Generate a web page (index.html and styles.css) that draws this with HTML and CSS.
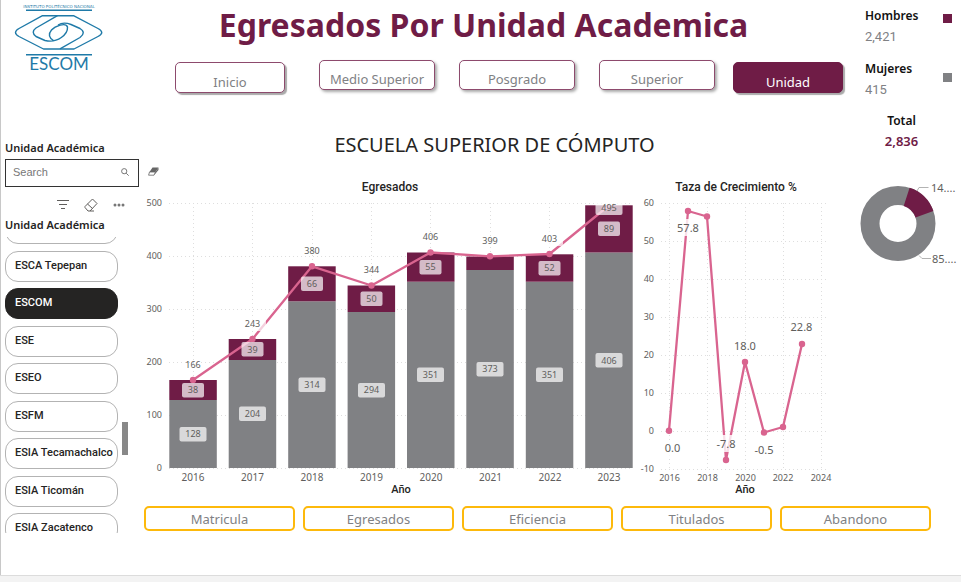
FILE: index.html
```html
<!DOCTYPE html>
<html lang="es">
<head>
<meta charset="utf-8">
<title>Egresados Por Unidad Academica</title>
<link rel="stylesheet" href="styles.css">
</head>
<body>
<div class="report">
  <aside class="sidebar">
    <svg class="logo" viewBox="0 0 110 74" role="img" aria-label="Instituto Politécnico Nacional ESCOM">
      <g fill="none" stroke="#1f7aa8" stroke-width="1.4" stroke-linejoin="round">
        <path d="M26 10.300H92M26 54.700H92"/>
        <path d="M42.500 15.700H73.500L98 28.500Q105.500 32.500 98 36.500L74 49H43.500L19 36.500Q12 32.500 19 28.500Z"/>
        <path d="M57.500 15.700L36 28Q30.500 32 36 36.500L45 40.500C58 43.500 68 34 67.500 27C66 22 55 26 51.500 30C48 34 49 38 53.500 40.500"/>
        <path d="M60 48.800L80 37.500Q86.500 32.500 80 28.500L71 24.500C66 22.500 61 23 58 25"/>
      </g>
      <text class="logo-top" x="59" y="8" text-anchor="middle">INSTITUTO POLITÉCNICO NACIONAL</text>
      <text class="logo-name" x="59" y="70" text-anchor="middle">ESCOM</text>
    </svg>

    <label class="side-title" for="search">Unidad Académica</label>
    <div class="search-row">
      <div class="search-box">
        <input id="search" type="text" placeholder="Search">
        <svg class="icon-search" viewBox="0 0 8 8"><circle cx="3.200" cy="3.200" r="2.600"/><path d="M5.200 5.200L7.700 7.700"/></svg>
      </div>
      <button class="clear" type="button" aria-label="Borrar">
        <svg viewBox="0 0 11 9"><path d="M4.500 .5H10.500L7.500 5H1.500Z" fill="#666"/><path d="M1.500 5H7.500L6 8.200H.6Z" fill="#fff" stroke="#666" stroke-width=".8"/><path d="M7.500 5L10.500 .5V3L6 8.200Z" fill="#666"/></svg>
      </button>
    </div>
    <div class="tools">
      <button type="button" aria-label="Filtros"><svg viewBox="0 0 14 14"><path d="M1 2.500H13M3 6.500H11M5 10.500H9"/></svg></button>
      <button type="button" aria-label="Borrar selección"><svg viewBox="0 0 14 14"><path d="M8.500 1L13 5.500L6 13H4L1 9.500V8.500ZM3.500 6L8.500 10.500M6 13H10"/></svg></button>
      <button type="button" aria-label="Más opciones"><svg class="dots" viewBox="0 0 14 14"><circle cx="3" cy="7" r="1.500"/><circle cx="7" cy="7" r="1.500"/><circle cx="11" cy="7" r="1.500"/></svg></button>
    </div>
    <h2 class="side-title">Unidad Académica</h2>
    <div class="scroller">
      <div class="units">
        <button type="button" tabindex="-1" aria-hidden="true"></button>
        <button type="button">ESCA Tepepan</button>
        <button type="button" class="selected" aria-pressed="true">ESCOM</button>
        <button type="button">ESE</button>
        <button type="button">ESEO</button>
        <button type="button">ESFM</button>
        <button type="button">ESIA Tecamachalco</button>
        <button type="button">ESIA Ticomán</button>
        <button type="button">ESIA Zacatenco</button>
      </div>
      <div class="thumb"></div>
    </div>
  </aside>

  <main class="main">
    <h1>Egresados Por Unidad Academica</h1>
    <nav class="levels">
      <button type="button" class="outer">Inicio</button>
      <div class="level-group">
        <button type="button">Medio Superior</button>
        <button type="button">Posgrado</button>
        <button type="button">Superior</button>
      </div>
      <button type="button" class="outer current">Unidad</button>
    </nav>
    <h2 class="school">ESCUELA SUPERIOR DE CÓMPUTO</h2>
    <div class="charts">
      <svg class="chart" viewBox="144 176 496 322" role="img" aria-label="Egresados">
        <text class="chart-title" x="390" y="191">Egresados</text>
        <path class="grid" d="M169 203.500H633M169 256.500H633M169 309.500H633M169 362.500H633M169 415.500H633M169 468.500H633M193.500 203V468M252.500 203V468M312.500 203V468M371.500 203V468M430.500 203V468M490.500 203V468M549.500 203V468M609.500 203V468"/>
        <g class="ticks end"><text x="162" y="206">500</text><text x="162" y="259">400</text><text x="162" y="312">300</text><text x="162" y="365">200</text><text x="162" y="418">100</text><text x="162" y="471">0</text></g>
        <g fill="#808184">
          <rect x="169.300" y="400" width="47.500" height="68"/><rect x="228.700" y="360" width="47.500" height="108"/><rect x="288.200" y="301.300" width="47.500" height="166.700"/><rect x="347.600" y="312" width="47.500" height="156"/><rect x="407" y="281.700" width="47.500" height="186.300"/><rect x="466.300" y="270" width="47.500" height="198"/><rect x="525.800" y="281.700" width="47.500" height="186.300"/><rect x="585.200" y="252.500" width="47.500" height="215.500"/>
        </g>
        <g fill="#6f1c46">
          <rect x="169.300" y="380" width="47.500" height="20"/><rect x="228.700" y="339" width="47.500" height="21"/><rect x="288.200" y="266.300" width="47.500" height="35"/><rect x="347.600" y="285.500" width="47.500" height="26.500"/><rect x="407" y="252.500" width="47.500" height="29.200"/><rect x="466.300" y="256.500" width="47.500" height="13.500"/><rect x="525.800" y="254.300" width="47.500" height="27.400"/><rect x="585.200" y="205.300" width="47.500" height="47.200"/>
        </g>
        <polyline class="series" points="193,380 252.500,339 312,266.300 371.500,285.500 430.500,252.500 490,256.300 549.500,254 609,205.500"/>
        <g class="points"><circle cx="193" cy="380" r="3.200"/><circle cx="252.500" cy="339" r="3.200"/><circle cx="312" cy="266.300" r="3.200"/><circle cx="371.500" cy="285.500" r="3.200"/><circle cx="430.500" cy="252.500" r="3.200"/><circle cx="490" cy="256.300" r="3.200"/><circle cx="549.500" cy="254" r="3.200"/></g>
        <g class="pills">
          <rect x="179.500" y="427" width="27" height="14.500" rx="2"/><rect x="239" y="406.500" width="27" height="14.500" rx="2"/><rect x="298.500" y="377.500" width="27" height="14.500" rx="2"/><rect x="358" y="383" width="27" height="14.500" rx="2"/><rect x="417" y="367.500" width="27" height="14.500" rx="2"/><rect x="476.500" y="362" width="27" height="14.500" rx="2"/><rect x="536" y="367.500" width="27" height="14.500" rx="2"/><rect x="595.500" y="353" width="27" height="14.500" rx="2"/>
          <rect x="182" y="383" width="22" height="14.500" rx="2"/><rect x="241.500" y="342" width="22" height="14.500" rx="2"/><rect x="301" y="276.500" width="22" height="14.500" rx="2"/><rect x="360.500" y="291.500" width="22" height="14.500" rx="2"/><rect x="419.500" y="260" width="22" height="14.500" rx="2"/><rect x="538.500" y="261" width="22" height="14.500" rx="2"/><rect x="598" y="221.500" width="22" height="14.500" rx="2"/>
          <rect x="595.500" y="200.500" width="27" height="14.500" rx="2"/><rect x="239" y="316" width="27" height="15" rx="2"/><rect x="536" y="231" width="27" height="15" rx="2"/>
        </g>
        <g class="ticks mid">
          <text x="193" y="437">128</text><text x="252.500" y="417">204</text><text x="312" y="388">314</text><text x="371.500" y="393">294</text><text x="430.500" y="378">351</text><text x="490" y="372">373</text><text x="549.500" y="378">351</text><text x="609" y="364">406</text>
          <text x="193" y="393">38</text><text x="252.500" y="353">39</text><text x="312" y="287">66</text><text x="371.500" y="302">50</text><text x="430.500" y="270">55</text><text x="549.500" y="271">52</text><text x="609" y="232">89</text>
          <text x="193" y="368">166</text><text x="252.500" y="327">243</text><text x="312" y="254">380</text><text x="371.500" y="273">344</text><text x="430.500" y="240">406</text><text x="490" y="244">399</text><text x="549.500" y="242">403</text><text x="609" y="211">495</text>
        </g>
        <g class="years"><text x="193" y="481">2016</text><text x="252.500" y="481">2017</text><text x="312" y="481">2018</text><text x="371.500" y="481">2019</text><text x="431" y="481">2020</text><text x="490.500" y="481">2021</text><text x="550" y="481">2022</text><text x="609" y="481">2023</text></g>
        <text class="axis-title" x="401" y="493">Año</text>
      </svg>

      <svg class="chart" viewBox="640 176 217 322" role="img" aria-label="Taza de Crecimiento %">
        <text class="chart-title" x="736" y="191">Taza de Crecimiento %</text>
        <path class="grid" d="M661 203.500H828M661 241.500H828M661 279.500H828M661 317.500H828M661 355.500H828M661 393.500H828M661 431.500H828M661 469.500H828M669.500 203V469M707.500 203V469M745.500 203V469M783.500 203V469M821.500 203V469"/>
        <g class="ticks end"><text x="654" y="206">60</text><text x="654" y="244">50</text><text x="654" y="282">40</text><text x="654" y="320">30</text><text x="654" y="358">20</text><text x="654" y="396">10</text><text x="654" y="434">0</text><text x="654" y="472">-10</text></g>
        <polyline class="series" points="669,430.700 688,211 707,216.500 726,460 745,362 764,432.500 783,427 802,344"/>
        <g class="points"><circle cx="669" cy="430.700" r="3.200"/><circle cx="688" cy="211" r="3.200"/><circle cx="707" cy="216.500" r="3.200"/><circle cx="726" cy="460" r="3.200"/><circle cx="745" cy="362" r="3.200"/><circle cx="764" cy="432.500" r="3.200"/><circle cx="783" cy="427" r="3.200"/><circle cx="802" cy="344" r="3.200"/></g>
        <g class="halos"><rect x="675" y="219" width="26" height="17"/><rect x="714" y="435" width="24" height="17"/><rect x="662" y="440" width="22" height="16"/><rect x="752" y="441" width="24" height="16"/></g>
        <g class="values"><text x="688" y="232">57.8</text><text x="672.500" y="452">0.0</text><text x="726" y="448">-7.8</text><text x="745" y="350">18.0</text><text x="764" y="454">-0.5</text><text x="801.500" y="331">22.8</text></g>
        <g class="ticks mid"><text x="669.500" y="481">2016</text><text x="707.500" y="481">2018</text><text x="745.500" y="481">2020</text><text x="783" y="481">2022</text><text x="821" y="481">2024</text></g>
        <text class="axis-title" x="745" y="493">Año</text>
      </svg>
    </div>
  </main>

  <section class="summary">
    <dl class="genders">
      <div class="gender"><div><dt>Hombres</dt><dd>2,421</dd></div><span class="key men"></span></div>
      <div class="gender"><div><dt>Mujeres</dt><dd>415</dd></div><span class="key women"></span></div>
    </dl>
    <dl class="total"><dt>Total</dt><dd>2,836</dd></dl>
    <svg class="donut" viewBox="857 180 104 88" role="img" aria-label="Distribución por género">
      <circle cx="898" cy="223.500" r="28" fill="none" stroke="#808184" stroke-width="19"/>
      <path fill="#6f1c46" d="M909.600 187.800A37.500 37.500 0 0 1 933.400 211.100L915.500 217.400A18.500 18.500 0 0 0 903.700 205.900Z"/>
      <path class="leader" d="M917 191L919 187.500H928.500M919 255.500L922 258.500H931"/>
      <g class="values start"><text x="931" y="192">14....</text><text x="932" y="263">85....</text></g>
    </svg>
  </section>

  <nav class="tabs">
    <button type="button">Matricula</button>
    <button type="button">Egresados</button>
    <button type="button">Eficiencia</button>
    <button type="button">Titulados</button>
    <button type="button">Abandono</button>
  </nav>
</div>
<footer class="strip"></footer>
</body>
</html>
```
FILE: styles.css
```css
* { box-sizing: border-box; }

body {
  margin: 0;
  min-height: 100vh;
  display: flex;
  flex-direction: column;
  background: #fff;
  color: #252423;
  font-family: "Noto Sans", "Open Sans", sans-serif;
}

h1, h2, dl, dd { margin: 0; }
button { font: inherit; cursor: pointer; }

.report {
  flex: 1;
  display: grid;
  grid-template-columns: 143px 1fr 104px;
  grid-template-rows: auto 1fr;
  border-left: 1px solid #c8c8c8;
}

.strip {
  height: 7px;
  background: #f3f3f3;
  border-top: 1px solid #dcdcdc;
}

/* Sidebar */
.sidebar {
  grid-row: 1 / 3;
  display: flex;
  flex-direction: column;
  padding-left: 4px;
}
.logo { width: 110px; margin: 0 0 66px -5px; }
.logo-top { font: 4px "DejaVu Sans", sans-serif; fill: #1f7aa8; }
.logo-name { font: 400 17px "Lato", sans-serif; fill: #1f7aa8; }

.side-title {
  font-size: 11px;
  font-weight: 600;
  line-height: 16px;
}
.search-row {
  display: flex;
  align-items: center;
  gap: 9px;
  width: max-content;
  margin-top: 3px;
}
.search-box {
  display: flex;
  align-items: center;
  width: 134px;
  height: 28px;
  padding: 0 9px 2px 7px;
  border: 1px solid #333;
}
.search-box input {
  flex: 1;
  min-width: 0;
  padding: 0;
  border: 0;
  outline: 0;
  font: 11px "Liberation Sans", sans-serif;
}
.search-box input::placeholder { color: #777; opacity: 1; }
.icon-search { width: 8px; fill: none; stroke: #777; stroke-width: 1; }
.clear { padding: 0 0 3px; border: 0; background: none; display: flex; }
.clear svg { width: 11px; }

.tools {
  display: flex;
  gap: 14px;
  padding: 11px 0 5px 51px;
}
.tools button { display: flex; padding: 0; border: 0; background: none; }
.tools svg { width: 14px; fill: none; stroke: #605e5c; stroke-width: 1; }
.tools .dots { fill: #777; stroke: none; }

.scroller {
  display: flex;
  gap: 4px;
  height: 296px;
  margin-top: 4px;
  overflow: hidden;
}
.units {
  display: flex;
  flex-direction: column;
  justify-content: space-between;
  flex: none;
  width: 113px;
  height: 331px;
  margin-top: -24px;
}
.units button {
  height: 31px;
  padding: 0 0 2px 9px;
  border: 1px solid #b3b3b3;
  border-radius: 13px;
  background: #fff;
  color: #252423;
  font: 500 11px "Roboto", sans-serif;
  text-align: left;
  white-space: nowrap;
}
.units .selected { background: #252423; border-color: #252423; color: #fff; }
.thumb { width: 6px; height: 33px; margin-top: 185px; background: #888; }

/* Main column */
h1 {
  color: #6f1c46;
  font-size: 32px;
  line-height: 50px;
  text-align: center;
  white-space: nowrap;
  padding-right: 34px;
}
.levels {
  display: flex;
  padding: 10px 0 0 31px;
}
.level-group {
  display: flex;
  gap: 24px;
  margin: 0 18px 0 34px;
}
.levels button {
  display: flex;
  align-items: flex-end;
  justify-content: center;
  width: 116px;
  height: 30px;
  padding: 0;
  border: 1px solid #8d4a6d;
  border-radius: 5px;
  background: #fff;
  box-shadow: 2px 2px 3px #aaa;
  color: #808184;
  font-size: 13px;
  line-height: 19px;
  white-space: nowrap;
}
.levels .outer { width: 110px; height: 31px; margin-top: 2px; box-shadow: 2px 2px 1px #aaa; }
.levels .current { background: #6f1c46; border-color: #6f1c46; color: #fff; }

.school {
  margin: 37px 0 16px;
  padding-right: 12px;
  font-size: 20px;
  font-weight: 400;
  line-height: 30px;
  text-align: center;
}
.charts { display: grid; grid-template-columns: 496fr 217fr; }
.chart { display: block; width: 100%; }
.chart-title { font: 500 12px "Roboto", sans-serif; fill: #252423; text-anchor: middle; }
.axis-title { font: 500 11px "Roboto", sans-serif; fill: #252423; text-anchor: middle; }
.grid { fill: none; stroke: #dedede; stroke-dasharray: 1 3; }
.ticks { font-size: 9px; fill: #605e5c; }
.years { font-size: 10px; fill: #605e5c; text-anchor: middle; }
.values { font-size: 11px; fill: #605e5c; text-anchor: middle; }
.start { text-anchor: start; }
.mid { text-anchor: middle; }
.end { text-anchor: end; }
.series { fill: none; stroke: #d9648f; stroke-width: 2.3; stroke-linejoin: round; }
.points { fill: #d9648f; }
.pills { fill: #fff; fill-opacity: .7; }
.halos { fill: #fff; fill-opacity: .8; }
.leader { fill: none; stroke: #b3b3b3; }

/* Totals */
.summary { padding-top: 6px; }
.genders {
  display: flex;
  flex-direction: column;
  gap: 11px;
  padding: 0 9px 0 8px;
}
.gender { display: flex; justify-content: space-between; align-items: center; }
.gender dt, .total dt { font-size: 12px; font-weight: 600; line-height: 20px; color: #111; }
.gender dd { font: 13px/22px "Roboto", sans-serif; color: #808184; }
.key { width: 9px; height: 9px; }
.men { background: #6f1c46; margin-bottom: 18px; }
.women { background: #808184; margin-bottom: 6px; }
.total { padding: 10px 15px 0 0; text-align: center; }
.total dd { font-size: 13px; font-weight: 600; line-height: 21px; color: #6f1c46; }
.donut { display: block; width: 100%; margin-top: 28px; }

/* Bottom tabs */
.tabs {
  grid-column: 2 / 4;
  align-self: start;
  display: grid;
  grid-template-columns: repeat(5, 1fr);
  gap: 8px;
  margin: 8px 30px 0 0;
}
.tabs button {
  height: 25px;
  padding: 0;
  border: 2px solid #fdb90b;
  border-radius: 5px;
  background: #fff;
  color: #808184;
  font-size: 13px;
  line-height: 20px;
}
```
